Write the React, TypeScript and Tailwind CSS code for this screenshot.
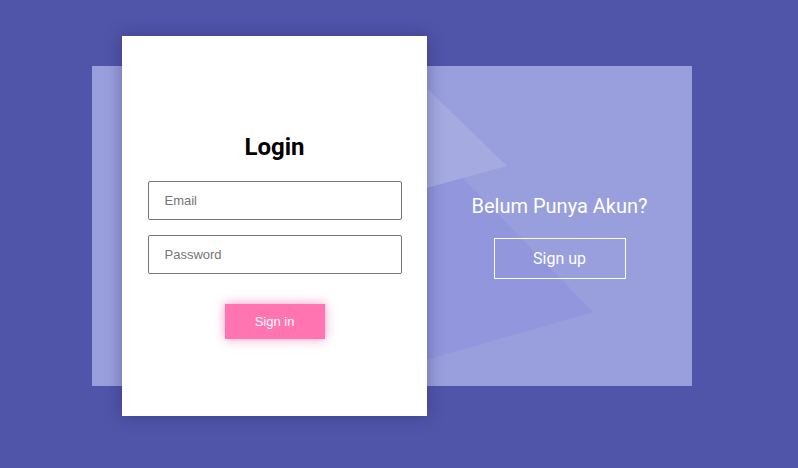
export default function App() {
  return (
    <div className="flex h-[468px] w-full items-start bg-[#5055aa] pl-[92px] pt-[66px]">
      <div className="relative flex h-[320px] w-[600px] bg-[#999edd]">
        <svg className="pointer-events-none absolute inset-0" width="600" height="320" viewBox="0 0 600 320">
          <polygon points="320,60 501,246 320,298" fill="#9196dd" />
          <polygon points="320,8 415,100 320,126" fill="#a5aae1" />
        </svg>
        <div className="relative z-10 -my-[30px] ml-[30px] flex h-[380px] w-[305px] shrink-0 flex-col items-center bg-white px-[26px] pt-[95px] shadow-[0_0_16px_rgba(20,20,60,0.35)]">
          <h1 className="font-['Roboto',sans-serif] text-[24px] font-bold leading-[32px] text-black">Login</h1>
          <input
            placeholder="Email"
            className="mt-[18px] h-[39px] w-[254px] rounded-[2px] border border-[#767676] px-4 font-['Liberation_Sans',Arial,sans-serif] text-[13px] placeholder:text-[#757575]"
          />
          <input
            placeholder="Password"
            type="password"
            className="mt-[15px] h-[39px] w-[254px] rounded-[2px] border border-[#767676] px-4 font-['Liberation_Sans',Arial,sans-serif] text-[13px] placeholder:text-[#757575]"
          />
          <button className="mt-[30px] h-[35px] w-[100px] bg-[#ff74b1] font-['Liberation_Sans',Arial,sans-serif] text-[13px] text-white shadow-[0_0_10px_rgba(255,116,177,0.75)]">
            Sign in
          </button>
        </div>
        <div className="relative z-10 flex flex-1 flex-col items-center pt-[128px]">
          <p className="font-['Roboto',sans-serif] text-[20px] leading-[24px] text-white">Belum Punya Akun?</p>
          <button className="mt-[20px] h-[41px] w-[132px] border border-white font-['Roboto',sans-serif] text-[16px] text-white">
            Sign up
          </button>
        </div>
      </div>
    </div>
  );
}
